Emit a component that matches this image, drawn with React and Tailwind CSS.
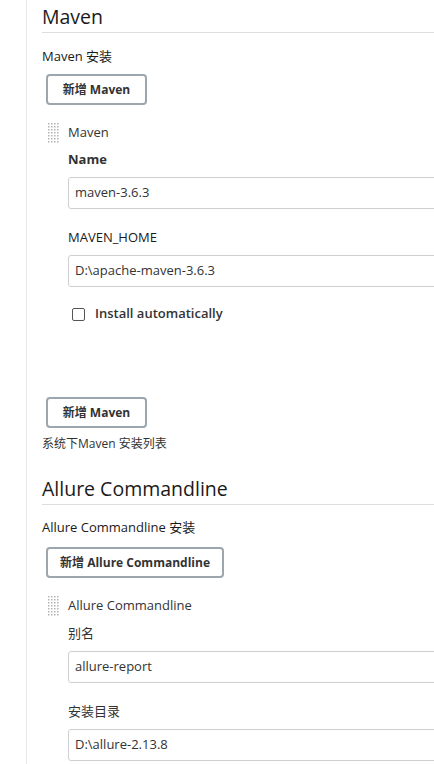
// Jenkins global tool configuration: Maven and Allure Commandline installations.
const FONT = { fontFamily: '"Open Sans", "Noto Sans CJK SC", sans-serif' };

function DragHandle() {
  const dots = [];
  for (let r = 0; r < 7; r++) {
    for (let c = 0; c < 4; c++) {
      dots.push(<rect key={`${r}-${c}`} x={c * 3} y={r * 3} width="1.5" height="1.5" fill="#b4b4b4" />);
    }
  }
  return (
    <svg width="12" height="20" viewBox="0 0 12 20" className="shrink-0">
      {dots}
    </svg>
  );
}

function SectionHeading({ children, className = "" }) {
  return (
    <div className={`border-b border-[#dedede] pt-[6px] pb-[4px] text-[19.5px] leading-[22px] text-[#1a1a1a] ${className}`}>
      {children}
    </div>
  );
}

function AddButton({ children, className = "" }) {
  return (
    <button className={`ml-[4px] h-[31px] self-start rounded-[4px] border-2 border-[#9ba6ae] bg-white text-[12px] font-bold text-[#333] ${className}`}>
      {children}
    </button>
  );
}

function TextField({ value, className = "" }) {
  return (
    <div className={`flex h-[32px] w-[420px] items-center rounded-[3px] border border-[#cfcfcf] px-[6px] text-[13px] text-[#333] ${className}`}>
      {value}
    </div>
  );
}

export default function App() {
  return (
    <div className="flex h-[764px] w-[434px] overflow-hidden bg-white" style={FONT}>
      <div className="w-[26px] shrink-0" />
      <div className="flex min-w-0 flex-1 flex-col border-l border-[#e8e8e8] pl-[15px]">
        <SectionHeading>Maven</SectionHeading>
        <div className="mt-[14px] text-[13px] leading-[18px] text-[#1a1a1a]">Maven 安装</div>
        <AddButton className="mt-[9px] w-[101px]">新增 Maven</AddButton>

        <div className="mt-[18px] ml-[6px] flex h-[20px] items-center gap-[8px]">
          <DragHandle />
          <span className="text-[13px] text-[#333]">Maven</span>
        </div>
        <div className="ml-[26px] flex flex-col">
          <div className="mt-[7px] text-[13px] leading-[18px] font-bold text-[#333]">Name</div>
          <TextField value="maven-3.6.3" className="mt-[9px]" />
          <div className="mt-[19px] text-[13px] leading-[18px] text-[#1a1a1a]">MAVEN_HOME</div>
          <TextField value="D:\apache-maven-3.6.3" className="mt-[9px]" />
          <label className="mt-[18px] ml-[4px] flex h-[18px] items-center gap-[10px]">
            <span className="h-[13px] w-[13px] rounded-[2px] border border-[#555] bg-white" />
            <span className="text-[13px] font-semibold text-[#333]">Install automatically</span>
          </label>
        </div>

        <AddButton className="mt-[74px] w-[101px]">新增 Maven</AddButton>
        <div className="mt-[8px] text-[12px] leading-[16px] text-[#333]">系统下Maven 安装列表</div>

        <SectionHeading className="mt-[20px]">Allure Commandline</SectionHeading>
        <div className="mt-[13px] text-[13px] leading-[18px] text-[#1a1a1a]">Allure Commandline 安装</div>
        <AddButton className="mt-[11px] h-[30px] w-[178px]">新增 Allure Commandline</AddButton>

        <div className="mt-[18px] ml-[6px] flex h-[20px] items-center gap-[8px]">
          <DragHandle />
          <span className="text-[13px] text-[#333]">Allure Commandline</span>
        </div>
        <div className="ml-[26px] flex flex-col">
          <div className="mt-[8px] text-[13px] leading-[18px] text-[#333]">别名</div>
          <TextField value="allure-report" className="mt-[9px]" />
          <div className="mt-[19px] text-[13px] leading-[18px] text-[#333]">安装目录</div>
          <TextField value="D:\allure-2.13.8" className="mt-[9px]" />
        </div>
      </div>
    </div>
  );
}
